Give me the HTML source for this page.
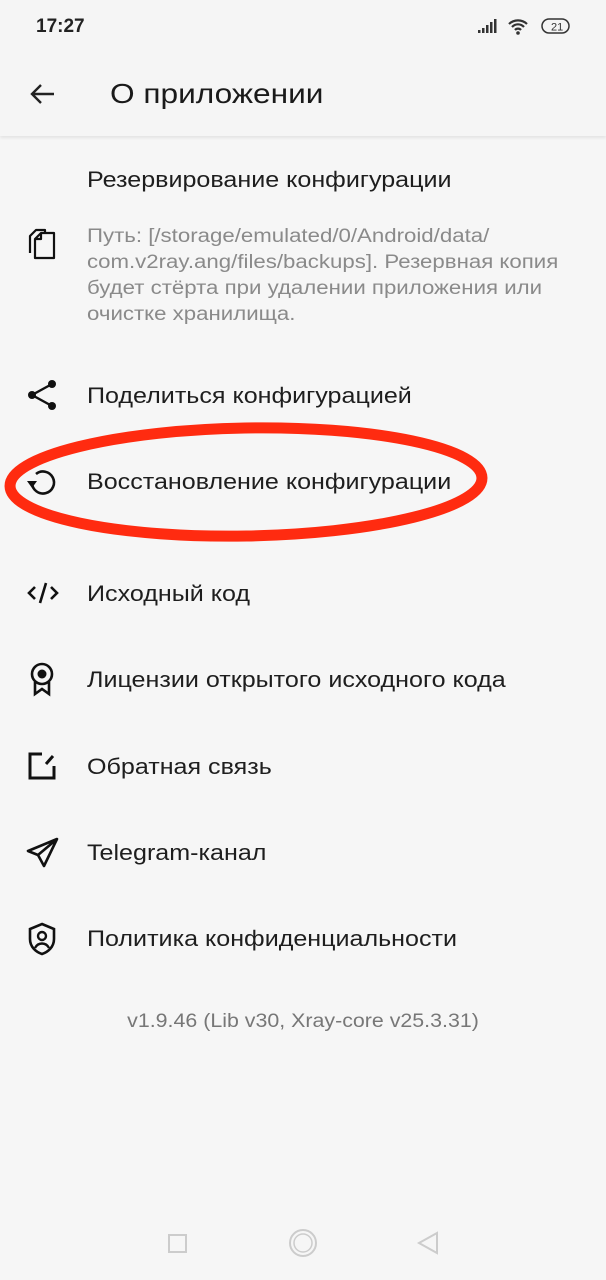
<!DOCTYPE html>
<html><head><meta charset="utf-8"><style>
body{margin:0;width:606px;height:1280px;background:#f6f6f6;font-family:"Liberation Sans",sans-serif;position:relative;overflow:hidden;color:#1c1c1c}
.a{position:absolute}
.t{position:absolute;left:87px;font-size:22px;color:#1e1e1e;white-space:nowrap;transform:scaleX(1.14);transform-origin:left}
.ic{position:absolute;left:26px}
</style></head><body>
<div class="a" style="left:0;top:0;width:606px;height:136px;background:#f5f5f5;box-shadow:0 2px 3px rgba(0,0,0,0.08)"></div>
<div class="a" style="left:36px;top:16px;font-size:19px;font-weight:bold;color:#222">17:27</div>
<svg class="a" style="left:476px;top:16px" width="96" height="22" viewBox="0 0 96 22">
<rect x="2" y="14" width="2.5" height="3" fill="#333"/><rect x="6" y="12" width="2.5" height="5" fill="#333"/><rect x="10" y="9" width="2.5" height="8" fill="#333"/><rect x="14" y="6" width="2.5" height="11" fill="#333"/><rect x="18" y="3" width="2.5" height="14" fill="#333"/>
<path d="M33 8 a13 13 0 0 1 18 0 M36 11 a8 8 0 0 1 12 0 M39 14 a4 4 0 0 1 6 0" stroke="#333" stroke-width="2.2" fill="none"/><circle cx="42" cy="17" r="1.8" fill="#333"/>
<rect x="66" y="3" width="27" height="14" rx="7" fill="none" stroke="#333" stroke-width="1.5"/><text x="75" y="14.5" font-size="11" font-family="Liberation Sans" fill="#333">21</text>
</svg>
<svg class="a" style="left:28px;top:80px" width="30" height="28" viewBox="0 0 30 28"><path d="M26 14H4 M13 5 L4 14 L13 23" stroke="#222" stroke-width="2.4" fill="none"/></svg>
<div class="a" style="left:110px;top:78px;font-size:28px;color:#1a1a1a;transform:scaleX(1.13);transform-origin:left">О приложении</div>

<div class="t" style="top:167px">Резервирование конфигурации</div>
<div class="a" style="left:87px;top:224px;font-size:19px;line-height:26px;color:#8a8a8a;width:450px;white-space:nowrap;transform:scaleX(1.17);transform-origin:left">Путь: [/storage/emulated/0/Android/data/<br>com.v2ray.ang/files/backups]. Резервная копия<br>будет стёрта при удалении приложения или<br>очистке хранилища.</div>
<svg class="ic" style="top:226px" width="34" height="36" viewBox="0 0 34 36"><path d="M4 27 V10 L10 4 H19 V7" stroke="#111" stroke-width="2.2" fill="none" stroke-linejoin="round"/><path d="M9 13 L15 7 H28 V32 H9 Z M9 13 H15 V7" stroke="#111" stroke-width="2.2" fill="none" stroke-linejoin="round"/></svg>

<svg class="ic" style="top:379px" width="32" height="32" viewBox="0 0 32 32"><circle cx="26" cy="5" r="4" fill="#111"/><circle cx="6" cy="16" r="4" fill="#111"/><circle cx="26" cy="27" r="4" fill="#111"/><path d="M26 5 L6 16 L26 27" stroke="#111" stroke-width="2.4" fill="none"/></svg>
<div class="t" style="top:383px">Поделиться конфигурацией</div>

<svg class="ic" style="top:466px" width="34" height="34" viewBox="0 0 34 34"><path d="M6 17 A11 11 0 1 0 10 8" stroke="#111" stroke-width="2.6" fill="none"/><path d="M1 15 L11 15 L6 22 Z" fill="#111"/></svg>
<div class="t" style="top:469px">Восстановление конфигурации</div>
<svg class="a" style="left:0;top:415px" width="500" height="135"><ellipse cx="246" cy="67" rx="236" ry="54" stroke="#ff2b10" stroke-width="11" fill="none" transform="rotate(-1 246 67)"/></svg>

<svg class="ic" style="top:580px" width="34" height="26" viewBox="0 0 34 26"><path d="M9 7 L3 13 L9 19 M25 7 L31 13 L25 19 M20 3 L14 23" stroke="#111" stroke-width="2.6" fill="none"/></svg>
<div class="t" style="top:581px">Исходный код</div>

<svg class="ic" style="top:661px" width="34" height="36" viewBox="0 0 34 36"><circle cx="16" cy="13" r="10" stroke="#111" stroke-width="2.6" fill="none"/><circle cx="16" cy="13" r="4.5" fill="#111"/><path d="M9 21 V33 L16 28 L23 33 V21" stroke="#111" stroke-width="2.6" fill="none"/></svg>
<div class="t" style="top:667px">Лицензии открытого исходного кода</div>

<svg class="ic" style="top:750px" width="34" height="34" viewBox="0 0 34 34"><path d="M16 4 H4 V28 H28 V16" stroke="#111" stroke-width="3" fill="none"/><path d="M20 14 L27 6" stroke="#111" stroke-width="3"/></svg>
<div class="t" style="top:754px">Обратная связь</div>

<svg class="ic" style="top:836px" width="34" height="34" viewBox="0 0 34 34"><path d="M31 3 L2 15 L12 19 L18 30 Z M12 19 L31 3" stroke="#111" stroke-width="2.6" fill="none" stroke-linejoin="round"/></svg>
<div class="t" style="top:840px">Telegram-канал</div>

<svg class="ic" style="top:921px" width="34" height="36" viewBox="0 0 34 36"><path d="M16 3 L28 8 V18 C28 26 22 31 16 33 C10 31 4 26 4 18 V8 Z" stroke="#111" stroke-width="2.6" fill="none"/><circle cx="16" cy="15" r="4" stroke="#111" stroke-width="2.4" fill="none"/><path d="M9 27 C12 21 20 21 23 27" stroke="#111" stroke-width="2.4" fill="none"/></svg>
<div class="t" style="top:926px">Политика конфиденциальности</div>

<div class="a" style="left:0;width:606px;top:1011px;text-align:center;font-size:19px;color:#777;transform:scaleX(1.125)">v1.9.46 (Lib v30, Xray-core v25.3.31)</div>

<svg class="a" style="left:160px;top:1228px" width="290" height="32"><rect x="9" y="7" width="17" height="17" stroke="#ccc" stroke-width="2" fill="none"/><circle cx="143" cy="15" r="13" stroke="#ccc" stroke-width="2" fill="none"/><circle cx="143" cy="15" r="9" stroke="#ccc" stroke-width="1.5" fill="none"/><path d="M277 5 L259 15 L277 25 Z" stroke="#ccc" stroke-width="2" fill="none"/></svg>
</body></html>
